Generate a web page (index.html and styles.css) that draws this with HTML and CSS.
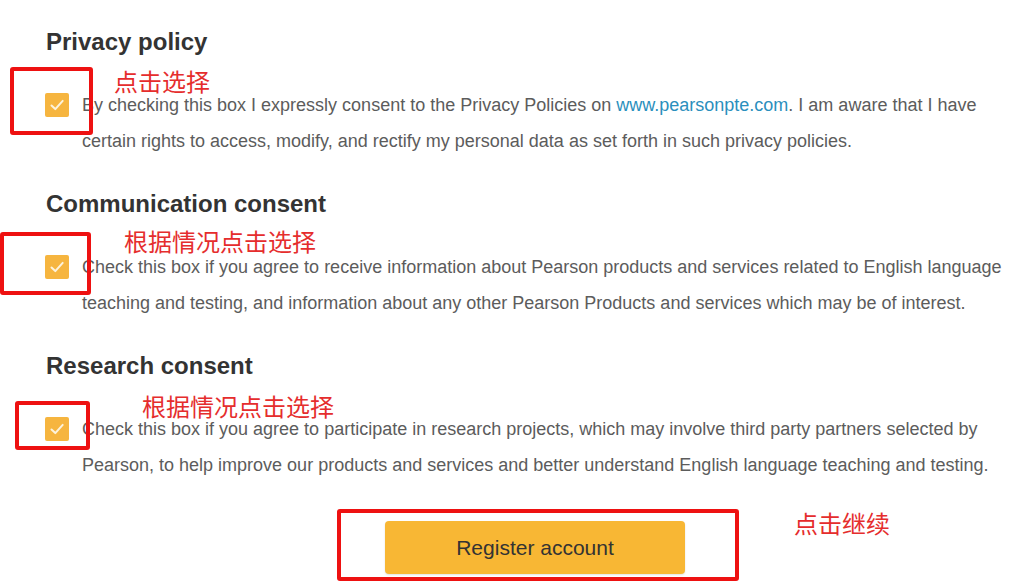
FILE: index.html
```html
<!DOCTYPE html>
<html lang="en">
<head>
<meta charset="utf-8">
<title>Consent</title>
<link rel="stylesheet" href="styles.css">
</head>
<body>
<div class="page">
  <section class="consent">
    <h2 class="consent-title">Privacy policy</h2>
    <div class="consent-row">
      <span class="check"><svg viewBox="0 0 24 24" width="24" height="24"><path d="M6.5 12.5l3.8 3.6 7.4-8.2" fill="none" stroke="#fdf3dc" stroke-width="2" stroke-linecap="round" stroke-linejoin="round"/></svg></span>
      <p class="consent-text">By checking this box I expressly consent to the Privacy Policies on <a class="link" href="#">www.pearsonpte.com</a>. I am aware that I have certain rights to access, modify, and rectify my personal data as set forth in such privacy policies.</p>
    </div>
  </section>
  <section class="consent">
    <h2 class="consent-title">Communication consent</h2>
    <div class="consent-row">
      <span class="check"><svg viewBox="0 0 24 24" width="24" height="24"><path d="M6.5 12.5l3.8 3.6 7.4-8.2" fill="none" stroke="#fdf3dc" stroke-width="2" stroke-linecap="round" stroke-linejoin="round"/></svg></span>
      <p class="consent-text">Check this box if you agree to receive information about Pearson products and services related to English language teaching and testing, and information about any other Pearson Products and services which may be of interest.</p>
    </div>
  </section>
  <section class="consent">
    <h2 class="consent-title">Research consent</h2>
    <div class="consent-row">
      <span class="check"><svg viewBox="0 0 24 24" width="24" height="24"><path d="M6.5 12.5l3.8 3.6 7.4-8.2" fill="none" stroke="#fdf3dc" stroke-width="2" stroke-linecap="round" stroke-linejoin="round"/></svg></span>
      <p class="consent-text">Check this box if you agree to participate in research projects, which may involve third party partners selected by Pearson, to help improve our products and services and better understand English language teaching and testing.</p>
    </div>
  </section>
  <div class="actions">
    <button class="register-btn" type="button">Register account</button>
  </div>
</div>

<div class="mark mark-box1"></div>
<div class="mark mark-box2"></div>
<div class="mark mark-box3"></div>
<div class="mark mark-box4"></div>
<div class="note note1">点击选择</div>
<div class="note note2">根据情况点击选择</div>
<div class="note note3">根据情况点击选择</div>
<div class="note note4">点击继续</div>
</body>
</html>
```

FILE: styles.css
```css
html, body {
  margin: 0;
  padding: 0;
  background: #fff;
  overflow: hidden;
}
body {
  width: 1021px;
  height: 587px;
  position: relative;
  font-family: "Liberation Sans", Arial, sans-serif;
}
.page {
  width: 980px;
  padding: 28px 0 0 45px;
}
.consent {
  margin-bottom: 31px;
}
.consent-title {
  margin: 0 0 31px 1px;
  font-size: 24px;
  line-height: 28px;
  font-weight: 700;
  color: #333;
}
.consent-row {
  display: flex;
  align-items: flex-start;
}
.check {
  flex: none;
  width: 24px;
  height: 24px;
  margin-top: 6px;
  background: #f6b53f;
  border-radius: 2px;
  display: flex;
}
.consent-text {
  margin: 0 0 0 13px;
  width: 940px;
  font-size: 18px;
  line-height: 36px;
  color: #5c5c5c;
}
.link {
  color: #2b8fbd;
  text-decoration: none;
}
.actions {
  display: flex;
  justify-content: center;
  padding-top: 7px;
}
.register-btn {
  width: 300px;
  height: 53px;
  border: none;
  border-radius: 4px;
  background: #f8b734;
  color: #333;
  font-family: "Liberation Sans", Arial, sans-serif;
  font-size: 21px;
  box-shadow: 0 1px 2px rgba(0,0,0,0.12);
}
.mark {
  position: absolute;
  border: 4px solid #ee1111;
  border-radius: 3px;
  box-sizing: border-box;
}
.mark-box1 { left: 10px; top: 67px; width: 83px; height: 68px; }
.mark-box2 { left: 0; top: 232px; width: 91px; height: 63px; }
.mark-box3 { left: 15px; top: 401px; width: 75px; height: 49px; }
.mark-box4 { left: 337px; top: 509px; width: 402px; height: 72px; }
.note {
  position: absolute;
  font-family: "Noto Sans CJK SC", sans-serif;
  font-size: 24px;
  line-height: 24px;
  color: #e52d2d;
  white-space: nowrap;
}
.note1 { left: 114px; top: 69px; }
.note2 { left: 124px; top: 229px; }
.note3 { left: 142px; top: 394px; }
.note4 { left: 794px; top: 511px; }
```
